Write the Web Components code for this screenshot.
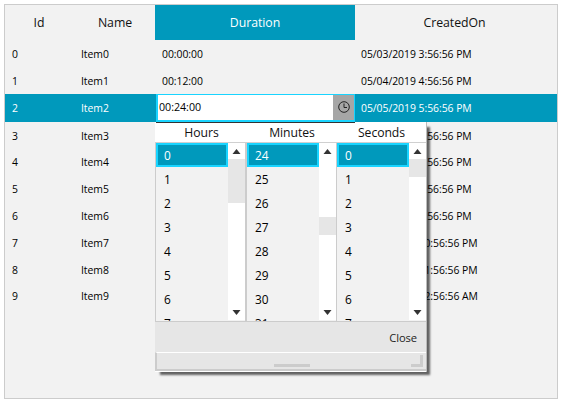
<!DOCTYPE html>
<html><head><meta charset="utf-8">
<style>
html,body{margin:0;padding:0;background:#fff;font-family:"Open Sans","Noto Sans",sans-serif;color:#000}
body{padding:4px;width:554px;height:395px;overflow:hidden}
</style></head><body>
<time-grid></time-grid>
<script>
const FONT='"Open Sans","Noto Sans",sans-serif';
class GridHeader extends HTMLElement{
 constructor(){super();this.attachShadow({mode:'open'}).innerHTML=`<style>
 :host{display:flex;align-items:center;justify-content:center;height:35px;font:12.3px ${FONT};letter-spacing:-.05px;color:#111;box-sizing:border-box}
 :host([active]){background:#0099bc;color:#fff}
 </style><slot></slot>`}
}
class GridRow extends HTMLElement{
 constructor(){super();this.attachShadow({mode:'open'}).innerHTML=`<style>
 :host{display:grid;grid-template-columns:70px 80px 200px 1fr;height:26.8px;padding-top:1px;box-sizing:border-box;align-items:center;font:10.4px ${FONT};letter-spacing:-.03px;color:#000}
 :host([tall]){height:27px}
 :host([selected]){background:#0099bc;color:#fff;height:27.7px;padding-top:0}
 ::slotted(span){padding-left:6px}
 ::slotted(span:first-child){padding-left:7px}
 ::slotted(.d){padding-left:7px}
 </style><slot></slot>`}
}
class ClockIcon extends HTMLElement{
 constructor(){super();this.attachShadow({mode:'open'}).innerHTML=`<style>:host{display:block;width:12px;height:12px}svg{display:block}</style>
 <svg width="12" height="12" viewBox="0 0 12 12" fill="none" stroke="#222" stroke-width="1"><circle cx="6" cy="6" r="5.3"/><path d="M6 2.5V6.5H9"/></svg>`}
}
class TimeEditor extends HTMLElement{
 constructor(){super();this.attachShadow({mode:'open'}).innerHTML=`<style>
 :host{display:flex;align-items:stretch;height:27.7px;box-sizing:border-box;border:solid #19d4ff;border-width:1.7px 1.6px 2px 2px;background:#fff;margin-left:1px;font:10.7px ${FONT};color:#000;box-shadow:0 1px 0 #333;position:relative;z-index:2}
 .t{flex:1;display:flex;align-items:center;padding-left:1px}
 .b{width:20.7px;background:#a6a6a6;display:flex;align-items:center;justify-content:center}
 </style><span class="t"><slot></slot></span><span class="b"><clock-icon></clock-icon></span>`}
}
class ScrollBar extends HTMLElement{
 constructor(){super();this.attachShadow({mode:'open'}).innerHTML=`<style>
 :host{display:flex;flex-direction:column;width:17px;height:177px;background:#fff;flex:none;box-sizing:border-box}
 .a{height:16px;flex:none;display:flex;align-items:center;justify-content:center}
 .track{flex:1;display:flex;flex-direction:column}
 .th{background:#e6e6e6;height:var(--h);margin-top:var(--top);flex:none}
 svg{display:block}
 </style><div class="a"><svg width="9" height="5" viewBox="0 0 9 5"><path d="M4.5 0L8.5 5H.5z" fill="#333"/></svg></div>
 <div class="track"><div class="th"></div></div>
 <div class="a"><svg width="9" height="5" viewBox="0 0 9 5"><path d="M.5 0H8.5L4.5 5z" fill="#333"/></svg></div>`}
}
class TimeList extends HTMLElement{
 constructor(){super();this.attachShadow({mode:'open'}).innerHTML=`<style>
 :host{display:flex;height:178px;overflow:hidden;background:#f2f2f2;box-sizing:border-box}
 .items{width:72px;flex:none;overflow:hidden;height:178px;font:11.9px ${FONT};color:#000}
 ::slotted(div){height:24px;box-sizing:border-box;display:flex;align-items:center;padding-left:8px}
 ::slotted(.sel){background:#0099bc;color:#fff;border:2px solid #19d4ff;padding-left:6px}
 </style><div class="items"><slot></slot></div><scroll-bar style="--top:var(--t);--h:var(--hh)"></scroll-bar>`}
}
class ColHead extends HTMLElement{
 constructor(){super();this.attachShadow({mode:'open'}).innerHTML=`<style>
 :host{display:flex;align-items:center;justify-content:center;font:12.2px ${FONT};letter-spacing:-.05px;color:#111;height:20px}
 </style><slot></slot>`}
}
class TimePopup extends HTMLElement{
 constructor(){super();
 const list=(s,n,t,h)=>`<time-list style="--t:${t}px;--hh:${h}px">${Array.from({length:n},(_,i)=>`<div class="${i==0?'sel':''}">${s+i}</div>`).join('')}</time-list>`;
 this.attachShadow({mode:'open'}).innerHTML=`<style>
 :host{position:absolute;left:150px;top:117px;width:272px;height:250px;background:#fff;box-sizing:border-box;border-right:1px solid #bbb;box-shadow:4px 4px 2px -1px rgba(0,0,0,.6);display:flex;flex-direction:column;font-family:${FONT}}
 .heads{display:grid;grid-template-columns:91px 90px 89px;height:20px;margin-left:1px;background:#fff;flex:none}
 .lists{display:grid;grid-template-columns:91px 90px 89px;height:178px;flex:none;border-top:1px solid #d0d0d0;border-bottom:1px solid #ccc;border-left:1px solid #ccc;background:#f2f2f2}
 .s2{border-right:2px solid #ccc}
 .s1{border-right:1px solid #ccc}
 .foot{height:30px;background:#e6e6e6;display:flex;align-items:center;justify-content:flex-end;padding-right:9px;font:11.2px ${FONT};letter-spacing:-.1px;color:#222;flex:none}
 .grip{height:19px;flex:none;background:#e6e6e6;border-top:1px solid #fff;border-bottom:2px solid #ccc;border-left:2px solid #ccc;box-sizing:border-box;position:relative;display:flex;justify-content:center}
 .bar{width:36px;height:3px;background:#ccc;margin-top:11px}
 svg{position:absolute;right:3px;bottom:2px}
 </style>
 <div class="heads"><col-head>Hours</col-head><col-head>Minutes</col-head><col-head>Seconds</col-head></div>
 <div class="lists">
  <div class="s2">${list(0,8,0,44)}</div>
  <div class="s1">${list(24,8,58,18)}</div>
  <div>${list(0,8,0,18)}</div>
 </div>
 <div class="foot">Close</div>
 <div class="grip"><div class="bar"></div><svg width="12" height="12" viewBox="0 0 12 12"><path d="M10.5 0V10.5H0" fill="none" stroke="#ccc" stroke-width="3"/></svg></div>`}
}
class TimeGrid extends HTMLElement{
 constructor(){super();
 const c=['05/03/2019 3:56:56 PM','05/04/2019 4:56:56 PM','05/05/2019 5:56:56 PM','05/06/2019 6:56:56 PM','05/07/2019 7:56:56 PM','05/08/2019 8:56:56 PM','05/09/2019 9:56:56 PM','05/10/2019 10:56:56 PM','05/11/2019 11:56:56 PM','05/12/2019 12:56:56 AM'];
 const d={0:'00:00:00',1:'00:12:00'};
 const rows=c.map((x,i)=>`<grid-row ${i==2?'selected':''} ${i<2?'tall':''}><span>${i}</span><span>Item${i}</span>${i==2?'<time-editor>00:24:00</time-editor>':`<span class="d">${d[i]||''}</span>`}<span>${x}</span></grid-row>`).join('');
 this.attachShadow({mode:'open'}).innerHTML=`<style>
 :host{display:block;position:relative;width:554px;height:395px;box-sizing:border-box;border:1px solid #ccc;background:#f2f2f2}
 .h{display:grid;grid-template-columns:70px 80px 200px 1fr}
 </style><div class="h"><grid-header style="padding-right:2px">Id</grid-header><grid-header>Name</grid-header><grid-header active>Duration</grid-header><grid-header style="padding-right:3px">CreatedOn</grid-header></div>
 ${rows}<time-popup></time-popup>`}
}
[['grid-header',GridHeader],['grid-row',GridRow],['clock-icon',ClockIcon],['time-editor',TimeEditor],['scroll-bar',ScrollBar],['time-list',TimeList],['col-head',ColHead],['time-popup',TimePopup],['time-grid',TimeGrid]].forEach(([n,k])=>customElements.define(n,k));
</script>
</body></html>
